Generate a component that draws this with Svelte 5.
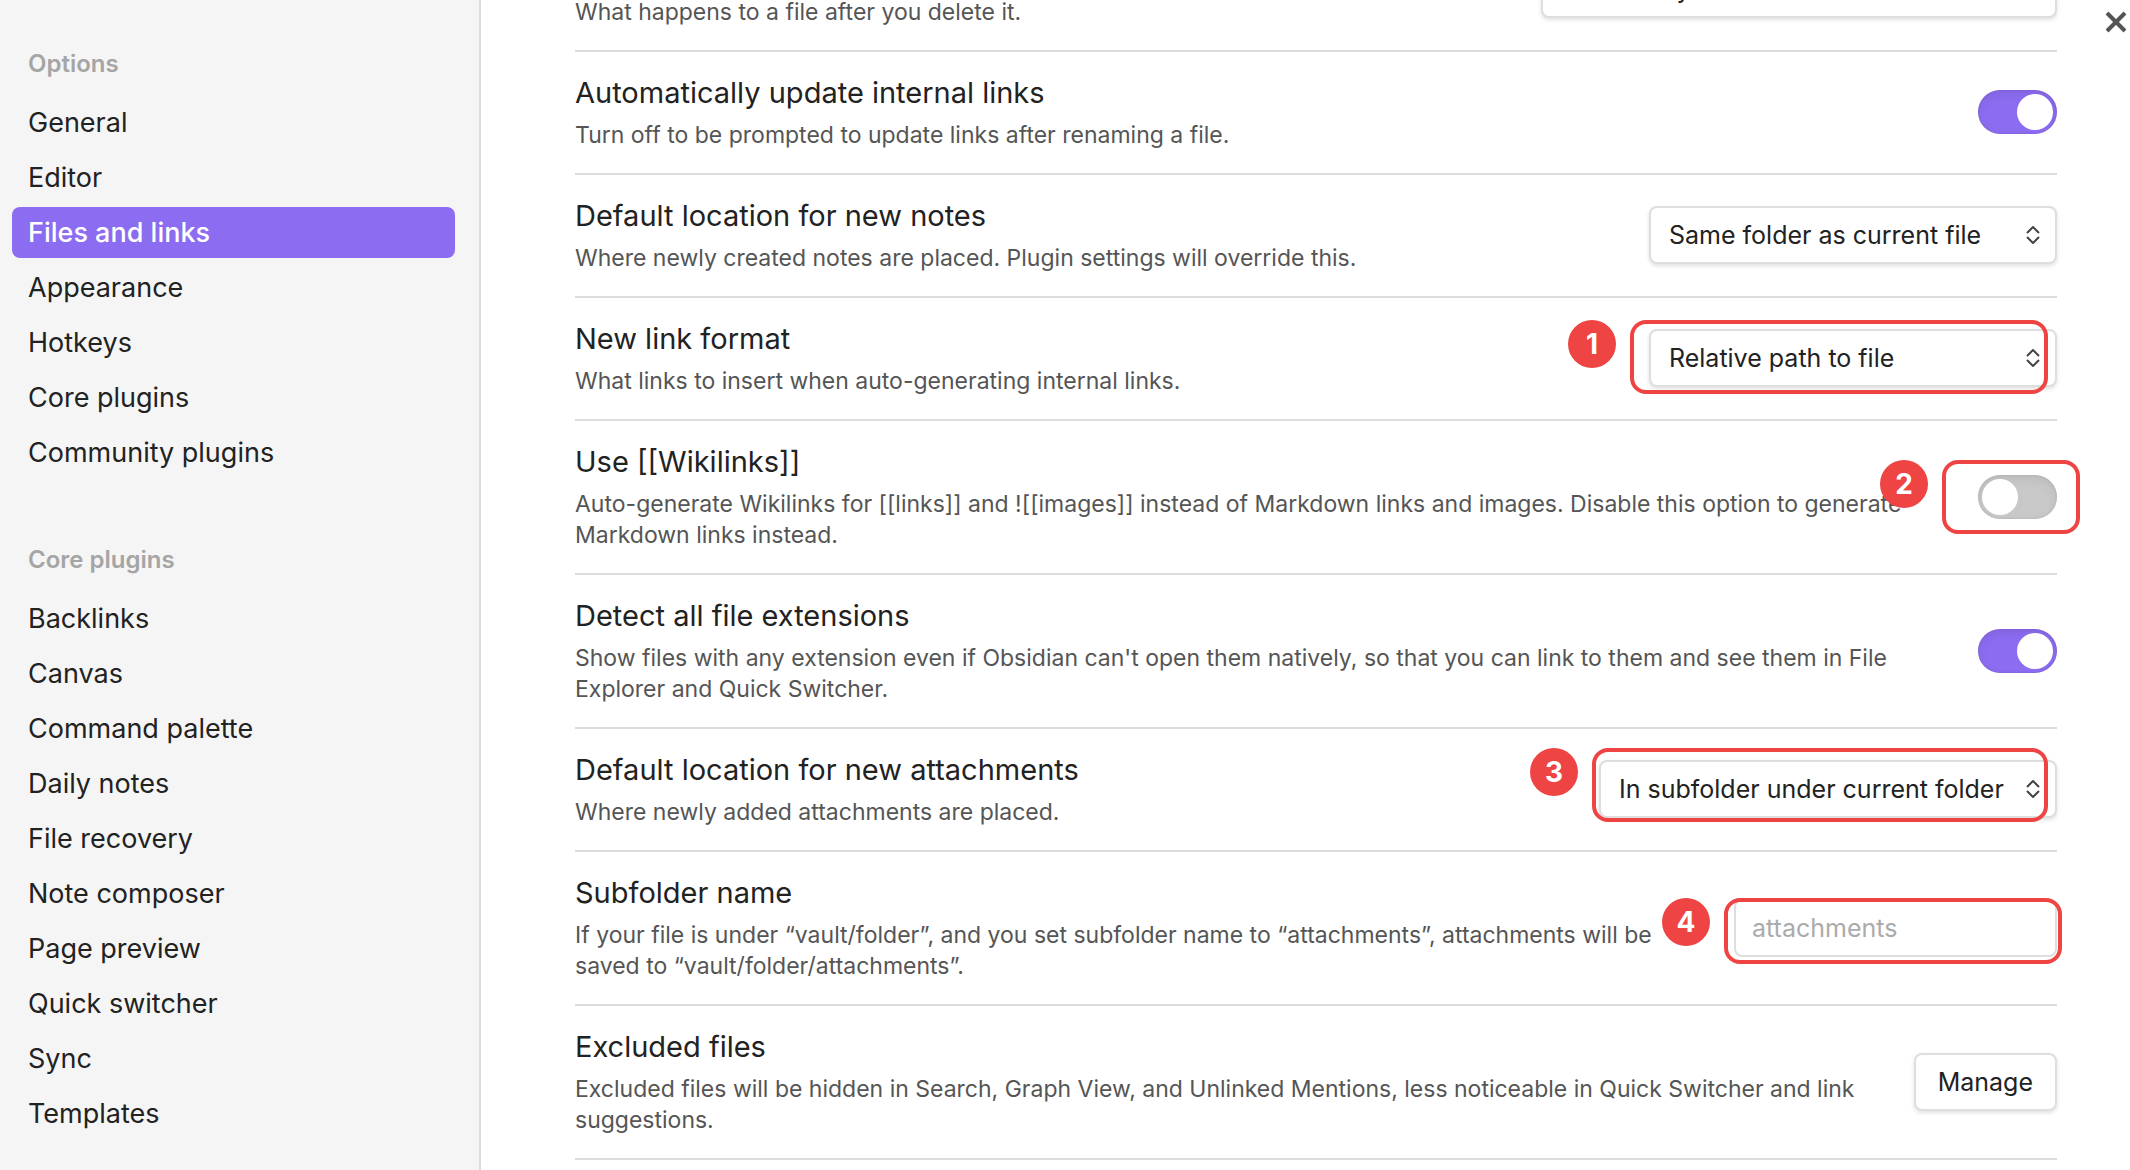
<script>
  const groups = [
    {
      title: 'Options',
      items: ['General', 'Editor', 'Files and links', 'Appearance', 'Hotkeys', 'Core plugins', 'Community plugins'],
    },
    {
      title: 'Core plugins',
      items: ['Backlinks', 'Canvas', 'Command palette', 'Daily notes', 'File recovery', 'Note composer', 'Page preview', 'Quick switcher', 'Sync', 'Templates'],
    },
  ];

  const settings = [
    {
      id: 'deleted',
      name: 'Deleted files',
      desc: 'What happens to a file after you delete it.',
      type: 'select',
      options: ['Move to system trash', 'Move to Obsidian trash (.trash folder)', 'Permanently delete'],
    },
    {
      id: 'update-links',
      name: 'Automatically update internal links',
      desc: 'Turn off to be prompted to update links after renaming a file.',
      type: 'toggle',
      on: true,
    },
    {
      id: 'new-notes',
      name: 'Default location for new notes',
      desc: 'Where newly created notes are placed. Plugin settings will override this.',
      type: 'select',
      options: ['Same folder as current file', 'Vault folder'],
    },
    {
      id: 'link-format',
      name: 'New link format',
      desc: 'What links to insert when auto-generating internal links.',
      type: 'select',
      options: ['Relative path to file', 'Shortest path when possible'],
      step: 1,
    },
    {
      id: 'wikilinks',
      name: 'Use [[Wikilinks]]',
      desc: 'Auto-generate Wikilinks for [[links]] and ![[images]] instead of Markdown links and images. Disable this option to generate Markdown links instead.',
      type: 'toggle',
      on: false,
      step: 2,
    },
    {
      id: 'extensions',
      name: 'Detect all file extensions',
      desc: "Show files with any extension even if Obsidian can't open them natively, so that you can link to them and see them in File Explorer and Quick Switcher.",
      type: 'toggle',
      on: true,
    },
    {
      id: 'attachments',
      name: 'Default location for new attachments',
      desc: 'Where newly added attachments are placed.',
      type: 'select',
      options: ['In subfolder under current folder', 'Vault folder'],
      step: 3,
    },
    {
      id: 'subfolder',
      name: 'Subfolder name',
      desc: 'If your file is under “vault/folder”, and you set subfolder name to “attachments”, attachments will be saved to “vault/folder/attachments”.',
      type: 'text',
      placeholder: 'attachments',
      step: 4,
    },
    {
      id: 'excluded',
      name: 'Excluded files',
      desc: 'Excluded files will be hidden in Search, Graph View, and Unlinked Mentions, less noticeable in Quick Switcher and link suggestions.',
      type: 'button',
      label: 'Manage',
    },
  ];
</script>

<div class="modal">
  <nav class="sidebar" aria-label="Settings">
    {#each groups as group}
      <section class="group">
        <h2>{group.title}</h2>
        <ul>
          {#each group.items as item}
            <li>
              <a href="#settings" class:active={item === 'Files and links'}>{item}</a>
            </li>
          {/each}
        </ul>
      </section>
    {/each}
  </nav>

  <main>
    <div class="settings">
      {#each settings as s}
        <div class="row">
          <div class="info">
            <label class="name" for={s.id}>{s.name}</label>
            <p id="{s.id}-desc">{s.desc}</p>
          </div>
          <div class="control">
            {#if s.type === 'toggle'}
              <input class="toggle" type="checkbox" role="switch" id={s.id} checked={s.on} aria-describedby="{s.id}-desc" />
            {:else if s.type === 'select'}
              <div class="dropdown {s.id}">
                <select id={s.id} aria-describedby="{s.id}-desc">
                  {#each s.options as option}
                    <option>{option}</option>
                  {/each}
                </select>
                <svg viewBox="0 0 16 20" aria-hidden="true">
                  <path d="M2 8 8 2l6 6M2 12l6 6 6-6" />
                </svg>
              </div>
            {:else if s.type === 'text'}
              <input class="text" type="text" id={s.id} placeholder={s.placeholder} aria-describedby="{s.id}-desc" />
            {:else}
              <button class="button" id={s.id} type="button">{s.label}</button>
            {/if}
          </div>
          {#if s.step}
            <div class="mark mark-{s.step}"><span class="badge">{s.step}</span></div>
          {/if}
        </div>
      {/each}
    </div>
  </main>

  <button class="close" type="button" aria-label="Close">
    <svg viewBox="0 0 24 24" aria-hidden="true"><path d="M3 3l18 18M21 3 3 21" /></svg>
  </button>
</div>

<style>
  :global(body) {
    margin: 0;
    background: #fff;
  }

  .modal,
  .modal * {
    box-sizing: border-box;
  }

  .modal {
    position: relative;
    display: flex;
    height: 100vh;
    overflow: hidden;
    color: #222;
    background: #fff;
    font-family: Inter, 'Liberation Sans', sans-serif;
    font-size: 27px;
  }

  .sidebar {
    flex: 0 0 481px;
    padding: 44px 24px 0 12px;
    background: #f5f5f5;
    border-right: 2px solid #dcdcdc;
  }

  .group {
    margin-bottom: 62px;
  }

  h2 {
    margin: 0 0 13px;
    padding-left: 16px;
    color: #a5a5a5;
    font-size: 24px;
    font-weight: 600;
    line-height: 40px;
  }

  ul {
    display: flex;
    flex-direction: column;
    gap: 4px;
    margin: 0;
    padding: 0;
    list-style: none;
  }

  li a {
    display: block;
    padding: 0 16px;
    border-radius: 8px;
    color: inherit;
    line-height: 51px;
    text-decoration: none;
  }

  li a.active {
    color: #fff;
    background: #8c6cf0;
    font-weight: 500;
  }

  main {
    flex: 1;
    min-width: 0;
    padding: 0 73px 0 94px;
  }

  .settings {
    margin-top: -71px;
  }

  .row {
    position: relative;
    display: flex;
    align-items: center;
    gap: 32px;
    padding: 24px 0 22px;
    border-bottom: 2px solid #dcdcdc;
  }

  .info {
    flex: 1;
    min-width: 0;
  }

  .name {
    display: block;
    margin-bottom: 10px;
    font-size: 29px;
    line-height: 34px;
  }

  p {
    margin: 0;
    color: #555;
    font-size: 23px;
    line-height: 31px;
  }

  .control {
    display: flex;
    flex: none;
    margin: -14px 0 -11px;
  }

  .dropdown {
    position: relative;
    width: 408px;
  }

  .dropdown.deleted {
    width: 516px;
  }

  .dropdown.attachments {
    width: 458px;
  }

  .dropdown svg {
    position: absolute;
    top: 19px;
    right: 16px;
    width: 16px;
    height: 20px;
    pointer-events: none;
  }

  svg path {
    fill: none;
    stroke: #444;
    stroke-width: 2;
    stroke-linejoin: round;
  }

  select,
  .text,
  .button {
    height: 58px;
    border: 2px solid #dedede;
    border-radius: 8px;
    color: #222;
    background: #fff;
    font-family: inherit;
    font-size: 25px;
    box-shadow: 0 2px 4px rgb(0 0 0 / 12%);
  }

  select {
    width: 100%;
    padding: 0 40px 0 18px;
    appearance: none;
  }

  .text {
    width: 323px;
    padding: 0 16px;
    box-shadow: none;
  }

  .text::placeholder {
    color: #ababab;
  }

  .button {
    padding: 0 22px;
    font-weight: 400;
  }

  .toggle {
    width: 79px;
    height: 44px;
    margin: 0;
    padding: 4px;
    border-radius: 22px;
    background: #c8c8c8;
    box-shadow: inset 0 4px 10px rgb(0 0 0 / 7%), inset 0 0 2px rgb(0 0 0 / 15%);
    appearance: none;
  }

  .toggle::after {
    display: block;
    width: 36px;
    height: 36px;
    border-radius: 50%;
    background: #fff;
    content: '';
  }

  .toggle:checked {
    background: #8c6cf0;
  }

  .toggle:checked::after {
    margin-left: auto;
  }

  .mark {
    position: absolute;
    height: 74px;
    border: 4px solid #ef4444;
    border-radius: 16px;
    pointer-events: none;
  }

  .mark-1 {
    top: 22px;
    right: 9px;
    width: 418px;
  }

  .mark-2 {
    top: 39px;
    right: -23px;
    width: 138px;
  }

  .mark-3 {
    top: 19px;
    right: 9px;
    width: 456px;
  }

  .mark-4 {
    top: 46px;
    right: -5px;
    width: 338px;
    height: 66px;
  }

  .badge {
    position: absolute;
    top: -4px;
    left: -66px;
    width: 48px;
    height: 48px;
    border-radius: 50%;
    color: #fff;
    background: #ef4444;
    font-size: 28px;
    font-weight: 700;
    line-height: 48px;
    text-align: center;
  }

  .close {
    position: absolute;
    top: 10px;
    right: 2px;
    width: 24px;
    height: 24px;
    padding: 0;
    border: 0;
    background: none;
  }

  .close svg {
    display: block;
    width: 24px;
    height: 24px;
  }

  .close path {
    stroke: #555;
    stroke-width: 4;
  }
</style>
